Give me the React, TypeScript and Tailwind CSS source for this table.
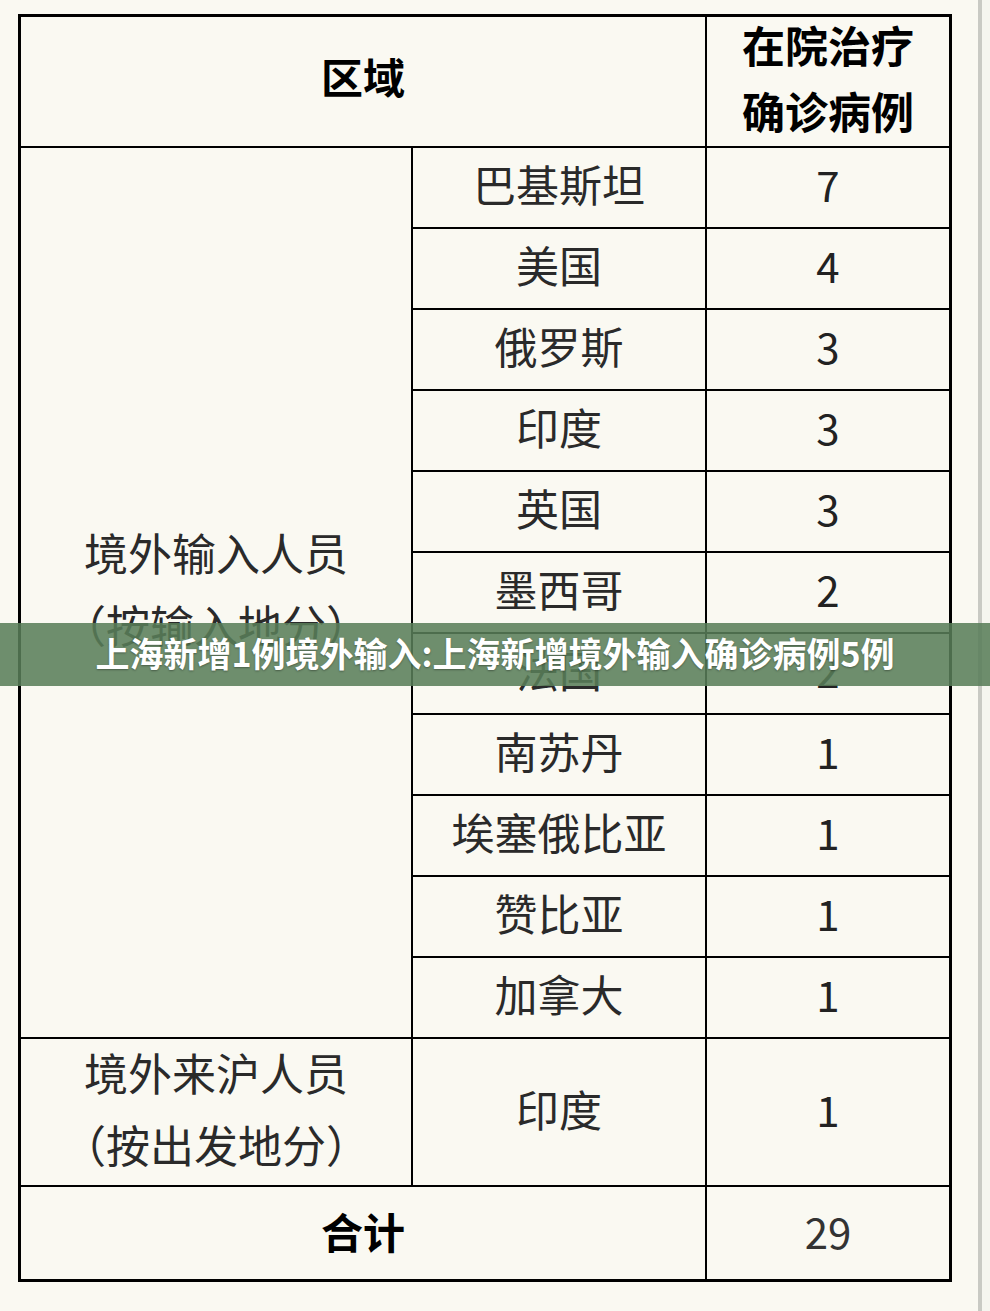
import React from "react";

const countries: [string, string][] = [
  ["巴基斯坦", "7"],
  ["美国", "4"],
  ["俄罗斯", "3"],
  ["印度", "3"],
  ["英国", "3"],
  ["墨西哥", "2"],
  ["法国", "2"],
  ["南苏丹", "1"],
  ["埃塞俄比亚", "1"],
  ["赞比亚", "1"],
  ["加拿大", "1"],
];

export default function App() {
  return (
    <div
      className="relative flex w-[990px] h-[1311px] bg-[#faf9f2] text-[#2a2a2a]"
      style={{ fontFamily: '"Noto Sans CJK SC", "Noto Sans", sans-serif' }}
    >
      <div className="w-[978px] pl-[18px] pt-[14px]">
        <div className="grid w-[934px] grid-cols-[392px_294px_242px] grid-rows-[131px_repeat(11,81px)_148px_92px] border-[3px] border-black">
          <div className="col-span-2 flex items-center justify-center border-r-2 border-b-2 border-black pb-[12px] text-[42px] font-bold text-black">
            区域
          </div>
          <div className="flex flex-col items-center justify-center border-b-2 border-black pb-[10px] text-[43px] font-bold leading-[66px] text-black">
            <span>在院治疗</span>
            <span>确诊病例</span>
          </div>
          <div className="row-span-11 flex flex-col items-center justify-center border-r-2 border-b-2 border-black pb-[10px] text-[44px] leading-[72px]">
            <span>境外输入人员</span>
            <span>（按输入地分）</span>
          </div>
          {countries.map(([name, n], i) => (
            <React.Fragment key={i}>
              <div
                className="flex items-center justify-center border-r-2 border-b-2 border-black pb-[8px] text-[43px]"
                style={{ gridRow: i + 2, gridColumn: 2 }}
              >
                {name}
              </div>
              <div
                className="flex items-center justify-center border-b-2 border-black pb-[8px] text-[42px] text-[#222]"
                style={{ gridRow: i + 2, gridColumn: 3 }}
              >
                {n}
              </div>
            </React.Fragment>
          ))}
          <div className="flex flex-col items-center justify-center border-r-2 border-b-2 border-black pb-[8px] text-[44px] leading-[72px]">
            <span>境外来沪人员</span>
            <span>（按出发地分）</span>
          </div>
          <div className="flex items-center justify-center border-r-2 border-b-2 border-black pb-[8px] text-[43px]">
            印度
          </div>
          <div className="flex items-center justify-center border-b-2 border-black pb-[8px] text-[42px] text-[#222]">
            1
          </div>
          <div className="col-span-2 flex items-center justify-center border-r-2 border-black pb-[6px] text-[42px] font-bold text-black">
            合计
          </div>
          <div className="flex items-center justify-center pb-[6px] text-[42px] text-[#333]">
            29
          </div>
        </div>
      </div>
      <div className="w-[4px] h-full bg-[#c9cac4]" />
      <div className="flex-1 h-full bg-[#f5f5ef]" />

      <div className="absolute left-0 top-[623px] flex h-[63px] w-[990px] items-center justify-center bg-[rgba(88,125,88,0.87)] pb-[4px]">
        <span className="text-[34px] font-bold leading-none text-white [text-shadow:0_1px_2px_rgba(0,0,0,0.35)]">
          上海新增1例境外输入:上海新增境外输入确诊病例5例
        </span>
      </div>
    </div>
  );
}
